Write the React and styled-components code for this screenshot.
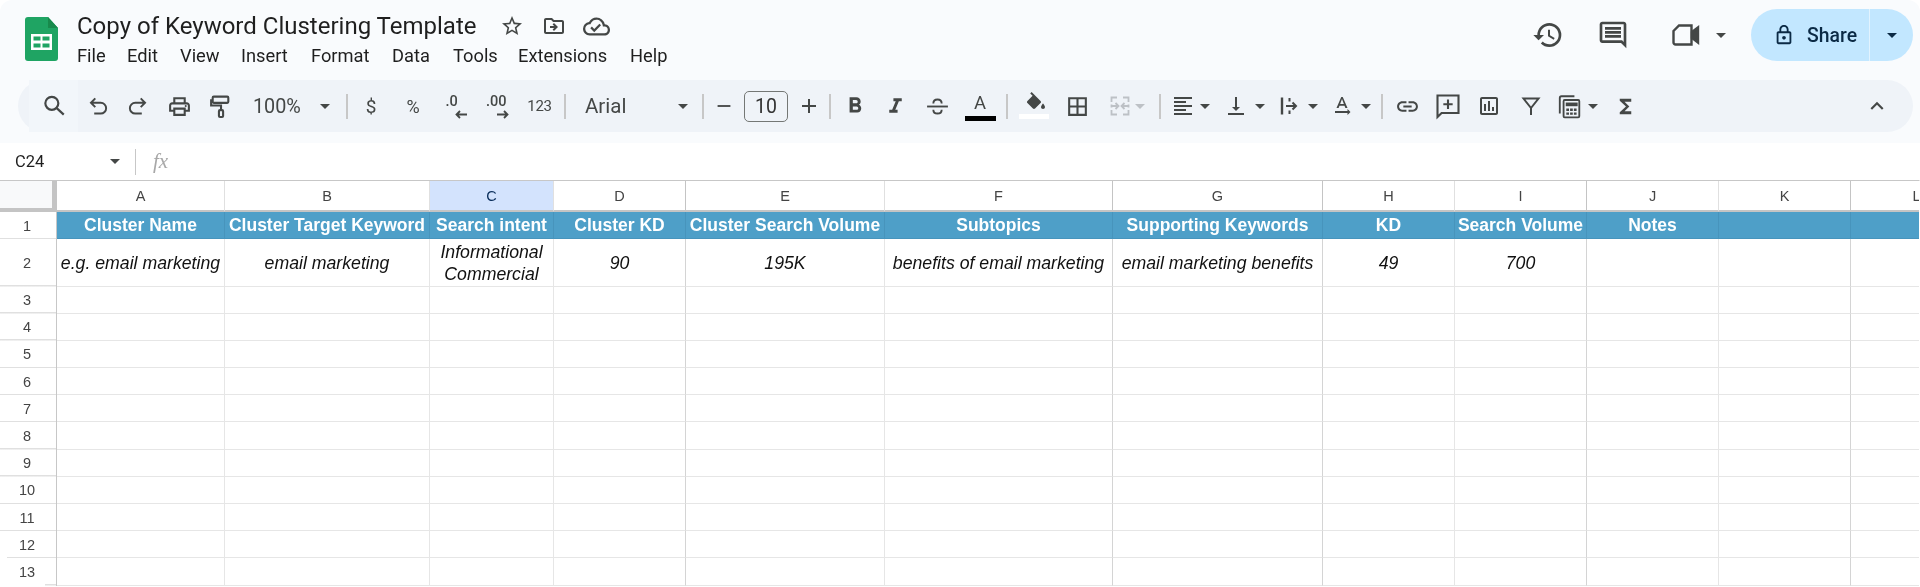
import React from 'react';
import styled, { createGlobalStyle } from 'styled-components';
import {
  MdOutlinePrint, MdFormatBold, MdFormatItalic,
  MdBorderAll, MdFormatAlignLeft, MdVerticalAlignBottom, MdTextRotationNone,
  MdLink, MdOutlineInsertChart, MdFunctions, MdExpandLess, MdHistory, MdOutlineComment,
  MdOutlineLock, MdStarBorder, MdOutlineDriveFileMove, MdOutlineCloudDone, MdAdd, MdRemove,
} from 'react-icons/md';

const Global = createGlobalStyle`
  html, body { margin: 0; padding: 0; background: #fff; overflow: hidden; }
  * { box-sizing: border-box; }
`;

const Page = styled.div`
  width: 1920px; height: 587px; overflow: hidden; background: #fff;
  font-family: Roboto, "Liberation Sans", sans-serif; color: #1f1f1f;
  filter: blur(0.45px);
`;
const Chrome = styled.header`
  height: 143px; background: #f9fbfd; border-radius: 12px 12px 0 0;
  display: flex; flex-direction: column;
`;
const TitleBar = styled.div`
  height: 80px; display: flex; align-items: flex-start; padding: 9px 7px 0 25px;
`;
const LogoBox = styled.div` width: 33px; height: 44px; margin-top: 8px; flex: none; `;
const TitleCol = styled.div` margin-left: 19px; display: flex; flex-direction: column; `;
const TitleRow = styled.div` display: flex; align-items: center; height: 34px; `;
const DocTitle = styled.div` font-size: 24px; color: #1f1f1f; white-space: nowrap; width: 399px; `;
const TitleIcons = styled.div` display: flex; align-items: center; margin-left: 15px; font-size: 24px; color: #444746; `;
const TitleIcon = styled.span` width: 42px; display: flex; justify-content: center; font-size: ${p => p.$size || 24}px; `;
const Menu = styled.nav` display: flex; height: 24px; align-items: center; `;
const MenuItem = styled.span` font-size: 18.3px; color: #1f1f1f; width: ${p => p.$w}px; white-space: nowrap; `;
const RightGroup = styled.div` margin-left: auto; display: flex; align-items: center; height: 52px; color: #444746; `;
const RightBtn = styled.div`
  width: ${p => p.$w}px; display: flex; align-items: center; justify-content: center; gap: ${p => p.$gap || 0}px;
`;
const SharePill = styled.div`
  width: 162px; height: 52px; border-radius: 26px; background: #c2e7ff; display: flex; color: #0b2a45;
`;
const ShareMain = styled.div`
  width: 119px; display: flex; align-items: center; padding-left: 22px; gap: 12px;
  border-right: 1px solid #e2f3ff; font-size: 19.4px; font-weight: 500;
`;
const ShareCaret = styled.div` flex: 1; display: flex; align-items: center; justify-content: center; `;
const Caret = styled.span`
  display: inline-block; width: 0; height: 0; flex: none;
  border-left: 5px solid transparent; border-right: 5px solid transparent;
  border-top: 5px solid ${p => p.$color || '#444746'};
`;

const Toolbar = styled.div`
  height: 52px; margin: 0 7px 0 18px; padding: 0 16px 0 11px; background: #eff3f8; border-radius: 26px;
  display: flex; align-items: center; color: #444746;
`;
const Tool = styled.div`
  width: ${p => p.$w}px; height: 100%; flex: none; display: flex; align-items: center;
  justify-content: center; font-size: ${p => p.$size || 17}px; color: #444746;
`;
const SearchTool = styled(Tool)` background: #f2f6fa; `;
const CaretTool = styled(Tool)`
  justify-content: flex-start; padding-left: ${p => p.$pad}px; gap: ${p => p.$gap}px;
`;
const ZoomText = styled.span` width: 47px; font-size: 19.8px; `;
const FontName = styled.span` font-size: 20.5px; width: 93px; `;
const Sep = styled.div`
  width: 2px; height: 25px; background: #c7c7c7; margin: 0 4px; flex: none;
`;
const Spacer = styled.div` flex: 1; `;
const SizeBox = styled.div`
  width: 44px; height: 31px; border: 1.5px solid #747775; border-radius: 5px;
  display: flex; align-items: center; justify-content: center; font-size: 19.5px; color: #333;
`;
const DecIcon = styled.div` display: flex; flex-direction: column; width: ${p => p.$w}px; margin-top: 2px; `;
const DecText = styled.span` font-size: 14.5px; font-weight: 500; line-height: 14px; `;
const DecArrow = styled.svg` align-self: flex-end; margin-top: 1px; `;
const Num = styled.span` font-size: 15px; letter-spacing: -0.3px; `;
const ColorIcon = styled.div` display: flex; flex-direction: column; align-items: center; margin-top: 2px; `;
const ColorLetter = styled.span` font-size: 18.5px; line-height: 19px; `;
const ColorBar = styled.span` width: 31px; height: 5px; background: ${p => p.$c}; display: block; margin-top: 3px; `;

const FormulaBar = styled.div` height: 37px; display: flex; align-items: center; padding-left: 15px; `;
const NameBox = styled.div` width: 105px; font-size: 16.5px; display: flex; align-items: center; `;
const NameText = styled.span` width: 95px; flex: none; `;
const FxSep = styled.div` width: 1px; height: 26px; background: #c7c7c7; margin-left: 15px; `;
const Fx = styled.span`
  font-family: "Liberation Serif", serif; font-style: italic; color: #a8a8a8; font-size: 21px; margin-left: 17px;
`;

const Sheet = styled.div`
  display: grid; border-top: 1.5px solid #c7c7c7; border-right: 1px solid #fff; height: 407px; overflow: hidden;
  grid-template-columns: 57px 168px 205px 124px 132px 199px 228px 210px 132px 132px 132px 132px 132px;
  grid-template-rows: 31px 27px 47.5px repeat(11, 27.2px);
  font-family: "Liberation Sans", Arial, sans-serif;
`;
const Corner = styled.div`
  background: #f8f9fa; border-right: 5px solid #c4c4c4; border-bottom: 4px solid #c4c4c4;
`;
const ColHead = styled.div`
  display: flex; align-items: center; justify-content: center; font-size: 14.5px;
  color: ${p => p.$sel ? '#0b2f5c' : '#444'};
  background: ${p => p.$sel ? '#d3e3fd' : '#fff'};
  border-right: 1px solid ${p => p.$strong ? '#c4c4c4' : '#e0e0e0'};
  border-bottom: 2px solid #c4c4c4;
`;
const RowHead = styled.div`
  display: flex; align-items: center; justify-content: center; font-size: 14.5px; color: #444;
  border-right: 1.5px solid #c7c7c7; padding-right: 2px;
  background: linear-gradient(#e0e0e0, #e0e0e0) no-repeat right bottom / calc(100% - ${p => p.$inset || 0}px) 1.5px #fff;
`;
const BlueCell = styled.div`
  background: #4e9fc8; color: #fff; font-weight: 700; font-size: 17.5px;
  display: flex; align-items: center; justify-content: center; white-space: nowrap;
  border-right: 1px solid #4794bc; border-bottom: 1px solid #4794bc;
`;
const DataCell = styled.div`
  font-style: italic; color: #111; font-size: 17.7px; line-height: 22px; text-align: center;
  display: flex; align-items: center; justify-content: center; white-space: pre-line; padding-top: 1px;
  border-right: 1px solid ${p => p.$strong ? '#d4d4d4' : '#e6e6e6'};
  border-bottom: 1.5px solid #e6e6e6;
`;

const Svg = ({ w = 24, h = 24, vb = '0 0 24 24', sw = 2, children }) => (
  <svg width={w} height={h} viewBox={vb} fill="none" stroke="currentColor" strokeWidth={sw}>{children}</svg>
);

const Logo = () => (
  <svg width="33" height="44" viewBox="0 0 33 44">
    <path d="M3 0h20l10 11v30a3 3 0 0 1-3 3H3a3 3 0 0 1-3-3V3a3 3 0 0 1 3-3z" fill="#1fa463" />
    <path d="M23 0l10 11H23z" fill="#188a4c" />
    <path d="M6 17h21v16H6z" fill="#fff" />
    <path d="M8.500 19.500h7v4h-7zM17.500 19.500h7v4h-7zM8.500 26.500h7v4h-7zM17.500 26.500h7v4h-7z" fill="#1fa463" />
  </svg>
);

const Search = () => <Svg w={26} h={26}><circle cx="10" cy="9.500" r="6" /><path d="M14.500 14l6.500 6" /></Svg>;
const Undo = () => <Svg w={26} h={26} sw={1.800}><path d="M9.500 5L5.500 9l4 4M5.500 9h9a5 5 0 0 1 0 10H8.500" /></Svg>;
const Redo = () => <Svg w={26} h={26} sw={1.800}><path d="M14.500 5l4 4-4 4M18.500 9h-9a5 5 0 0 0 0 10h6" /></Svg>;
const Roller = () => (
  <Svg w={25} h={25}>
    <rect x="4.500" y="2.500" width="15" height="6" rx="1" />
    <path d="M4.500 6H3v5h9.500v4" />
    <rect x="10.500" y="15.500" width="4" height="6.500" rx="1" />
  </Svg>
);
const Strike = () => (
  <Svg w={25} h={25} sw={1.800}>
    <path d="M2 12h20" />
    <path d="M8 9c0-5 8-5 8 0M8 15c0 5 8 5 8 0" />
  </Svg>
);
const ArrowLeft = () => (
  <DecArrow width="12" height="9" viewBox="0 0 12 9" fill="none" stroke="currentColor" strokeWidth="1.800">
    <path d="M12 4.500H2M5 1L1.500 4.500 5 8" />
  </DecArrow>
);
const ArrowRight = () => (
  <DecArrow width="12" height="9" viewBox="0 0 12 9" fill="none" stroke="currentColor" strokeWidth="1.800">
    <path d="M0 4.500h10M7 1l3.500 3.500L7 8" />
  </DecArrow>
);
const Fill = () => (
  <svg width="30" height="30" viewBox="0 0 30 30">
    <g transform="translate(5 0)">
      <path fill="currentColor" d="M16.560 9.940L7.620 1 6.210 2.410l2.380 2.380-5.150 5.150c-.59.59-.59 1.540 0 2.120l5.500 5.500c.29.29.68.44 1.060.44s.77-.15 1.060-.44l5.500-5.500c.59-.58.59-1.530 0-2.120z" />
      <path fill="currentColor" d="M19 12.500s-2 2.170-2 3.500c0 1.100.9 2 2 2s2-.9 2-2c0-1.330-2-3.500-2-3.500z" />
    </g>
    <rect x="0" y="23" width="30" height="5" fill="#fff" />
  </svg>
);
const Merge = () => (
  <svg width="24" height="24" viewBox="0 0 24 24" fill="none" stroke="#bdc1c6" strokeWidth="1.800">
    <path d="M3.500 8V3.500H9M15 3.500h5.500V8M3.500 16v4.500H9M15 20.500h5.500V16M3.500 10.500v3M20.500 10.500v3" />
    <path d="M3.500 12h6.500M7.500 9l3 3-3 3M20.500 12H14M16.500 9l-3 3 3 3" />
  </svg>
);
const Wrap = () => (
  <Svg>
    <path d="M5 3.500v17" strokeWidth="2.400" />
    <path d="M12.500 4v3.500M12.500 16.500V20" />
    <path d="M9 12h10M15.500 8.500L19 12l-3.500 3.500" />
  </Svg>
);
const AddComment = () => (
  <Svg w={28} h={28} sw={1.800}>
    <path d="M3 3h18v15H6.500L3 21.500z" />
    <path d="M12 6.500v8M8 10.500h8" />
  </Svg>
);
const Filter = () => <Svg><path d="M4.500 4.500h15L12 14zM12 14v7" /></Svg>;
const Calc = () => (
  <Svg w={26} h={28} sw={1.700}>
    <path d="M3.500 19V4.500A1.500 1.500 0 0 1 5 3h12" />
    <rect x="7" y="6.500" width="14.500" height="16" rx="1" />
    <path d="M9 10.500h11" strokeWidth="3.400" />
    <path d="M9.500 15.500h2.500M13 15.500h2.500M16.500 15.500h2.500M9.500 19h2.500M13 19h2.500M16.500 19h2.500" strokeWidth="2.200" />
  </Svg>
);
const Video = () => (
  <svg width="30" height="24" viewBox="0 0 30 24" fill="none" stroke="currentColor" strokeWidth="2.400">
    <path d="M2.500 8L8 2.500h12.500v19H4.500a2 2 0 0 1-2-2z" />
    <path d="M21 9l6-4.500v15L21 15z" fill="currentColor" />
  </svg>
);

const menu = [['File', 50], ['Edit', 53], ['View', 61], ['Insert', 70], ['Format', 81], ['Data', 61], ['Tools', 65], ['Extensions', 112], ['Help', 40]];

const cols = [
  { l: 'A', h: 'Cluster Name', d: 'e.g. email marketing' },
  { l: 'B', h: 'Cluster Target Keyword', d: 'email marketing' },
  { l: 'C', h: 'Search intent', d: 'Informational\nCommercial', sel: true },
  { l: 'D', h: 'Cluster KD', d: '90', strong: true },
  { l: 'E', h: 'Cluster Search Volume', d: '195K' },
  { l: 'F', h: 'Subtopics', d: 'benefits of email marketing', strong: true },
  { l: 'G', h: 'Supporting Keywords', d: 'email marketing benefits', strong: true },
  { l: 'H', h: 'KD', d: '49' },
  { l: 'I', h: 'Search Volume', d: '700', strong: true },
  { l: 'J', h: 'Notes', d: '' },
  { l: 'K', h: '', d: '', strong: true },
  { l: 'L', h: '', d: '' },
];

const insets = { 12: 7, 13: 45 };

export default function App() {
  return (
    <Page>
      <Global />
      <Chrome>
        <TitleBar>
          <LogoBox><Logo /></LogoBox>
          <TitleCol>
            <TitleRow>
              <DocTitle>Copy of Keyword Clustering Template</DocTitle>
              <TitleIcons>
                <TitleIcon><MdStarBorder /></TitleIcon>
                <TitleIcon><MdOutlineDriveFileMove /></TitleIcon>
                <TitleIcon $size={27}><MdOutlineCloudDone /></TitleIcon>
              </TitleIcons>
            </TitleRow>
            <Menu>
              {menu.map(([m, w]) => <MenuItem key={m} $w={w}>{m}</MenuItem>)}
            </Menu>
          </TitleCol>
          <RightGroup>
            <RightBtn $w={64}><MdHistory size={32} /></RightBtn>
            <RightBtn $w={66}><MdOutlineComment size={32} /></RightBtn>
            <RightBtn $w={105} $gap={15}><Video /><Caret /></RightBtn>
            <SharePill>
              <ShareMain><MdOutlineLock size={22} />Share</ShareMain>
              <ShareCaret><Caret $color="#0b2a45" /></ShareCaret>
            </SharePill>
          </RightGroup>
        </TitleBar>
        <Toolbar>
          <SearchTool $w={49}><Search /></SearchTool>
          <Tool $w={39}><Undo /></Tool>
          <Tool $w={42}><Redo /></Tool>
          <Tool $w={41}><MdOutlinePrint size={25} /></Tool>
          <Tool $w={40}><Roller /></Tool>
          <CaretTool $w={102} $pad={13} $gap={20}><ZoomText>100%</ZoomText><Caret /></CaretTool>
          <Sep />
          <Tool $w={38} $size={19}>$</Tool>
          <Tool $w={46} $size={18}>%</Tool>
          <Tool $w={40}><DecIcon $w={21}><DecText>.0</DecText><ArrowLeft /></DecIcon></Tool>
          <Tool $w={43}><DecIcon $w={23}><DecText>.00</DecText><ArrowRight /></DecIcon></Tool>
          <Tool $w={41}><Num>123</Num></Tool>
          <Sep />
          <CaretTool $w={128} $pad={15} $gap={0}><FontName>Arial</FontName><Caret /></CaretTool>
          <Sep />
          <Tool $w={32}><MdRemove size={22} /></Tool>
          <Tool $w={52}><SizeBox>10</SizeBox></Tool>
          <Tool $w={33}><MdAdd size={24} /></Tool>
          <Sep />
          <Tool $w={39}><MdFormatBold size={26} /></Tool>
          <Tool $w={43}><MdFormatItalic size={25} /></Tool>
          <Tool $w={41}><Strike /></Tool>
          <Tool $w={44}><ColorIcon><ColorLetter>A</ColorLetter><ColorBar $c="#000" /></ColorIcon></Tool>
          <Sep />
          <Tool $w={43}><Fill /></Tool>
          <Tool $w={44}><MdBorderAll size={25} /></Tool>
          <CaretTool $w={56} $pad={9} $gap={3}><Merge /><Caret $color="#bdc1c6" /></CaretTool>
          <Sep />
          <CaretTool $w={52} $pad={6} $gap={5}><MdFormatAlignLeft size={24} /><Caret /></CaretTool>
          <CaretTool $w={53} $pad={7} $gap={7}><MdVerticalAlignBottom size={24} /><Caret /></CaretTool>
          <CaretTool $w={55} $pad={7} $gap={7}><Wrap /><Caret /></CaretTool>
          <CaretTool $w={52} $pad={5} $gap={7}><MdTextRotationNone size={24} /><Caret /></CaretTool>
          <Sep />
          <Tool $w={41}><MdLink size={25} /></Tool>
          <Tool $w={40}><AddComment /></Tool>
          <Tool $w={42}><MdOutlineInsertChart size={24} /></Tool>
          <Tool $w={41}><Filter /></Tool>
          <CaretTool $w={54} $pad={5} $gap={6}><Calc /><Caret /></CaretTool>
          <Tool $w={40}><MdFunctions size={23} /></Tool>
          <Spacer />
          <Tool $w={40}><MdExpandLess size={26} /></Tool>
        </Toolbar>
      </Chrome>
      <FormulaBar>
        <NameBox><NameText>C24</NameText><Caret /></NameBox>
        <FxSep />
        <Fx>fx</Fx>
      </FormulaBar>
      <Sheet>
        <Corner />
        {cols.map(c => <ColHead key={c.l} $sel={c.sel} $strong={c.strong}>{c.l}</ColHead>)}
        <RowHead>1</RowHead>
        {cols.map(c => <BlueCell key={c.l}>{c.h}</BlueCell>)}
        <RowHead>2</RowHead>
        {cols.map(c => <DataCell key={c.l} $strong={c.strong}>{c.d}</DataCell>)}
        {Array.from({ length: 11 }, (_, r) => (
          <React.Fragment key={r}>
            <RowHead $inset={insets[r + 3]}>{r + 3}</RowHead>
            {cols.map(c => <DataCell key={c.l} $strong={c.strong} />)}
          </React.Fragment>
        ))}
      </Sheet>
    </Page>
  );
}
